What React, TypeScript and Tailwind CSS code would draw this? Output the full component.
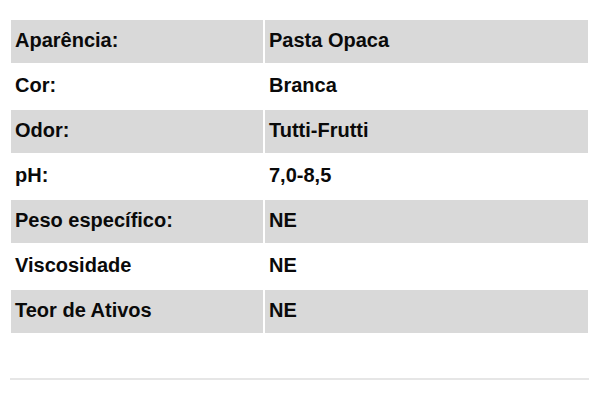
const rows: [string, string][] = [
  ['Aparência:', 'Pasta Opaca'],
  ['Cor:', 'Branca'],
  ['Odor:', 'Tutti-Frutti'],
  ['pH:', '7,0-8,5'],
  ['Peso específico:', 'NE'],
  ['Viscosidade', 'NE'],
  ['Teor de Ativos', 'NE'],
]

export default function App() {
  return (
    <div
      className="w-[600px] h-[400px] bg-white px-[10px] pt-[19px]"
      style={{ fontFamily: '"Liberation Sans", Arial, sans-serif' }}
    >
      <div className="w-[579px] flex flex-col">
        {rows.map(([k, v], i) => (
          <div key={k} className="flex h-[45px]">
            <div
              className={
                'w-[254px] flex items-center pl-[4px] pb-[3px] text-[20px] font-bold text-[#0a0a0a] border border-white ' +
                (i % 2 === 0 ? 'bg-[#d9d9d9]' : 'bg-white')
              }
            >
              {k}
            </div>
            <div
              className={
                'flex-1 flex items-center pl-[4px] pb-[3px] text-[20px] font-bold text-[#0a0a0a] border border-white ' +
                (i % 2 === 0 ? 'bg-[#d9d9d9]' : 'bg-white')
              }
            >
              {v}
            </div>
          </div>
        ))}
      </div>
      <div className="w-[579px] h-[2px] bg-[#e6e6e6] mt-[44px]" />
    </div>
  )
}
